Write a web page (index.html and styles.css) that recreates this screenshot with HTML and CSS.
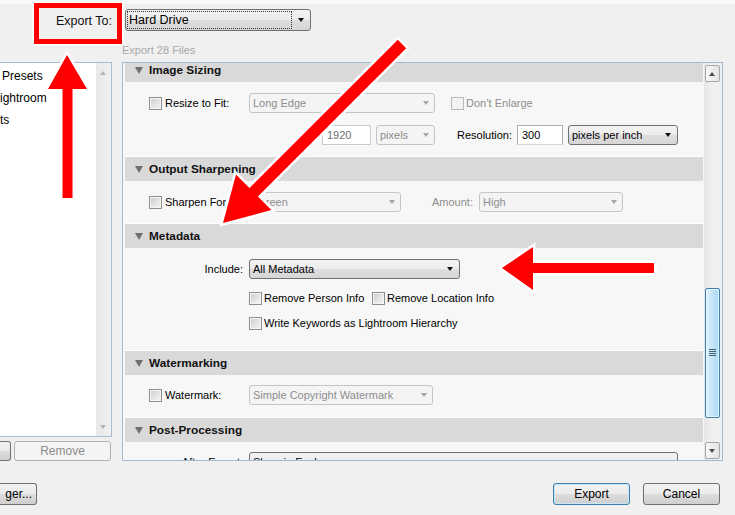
FILE: index.html
```html
<!DOCTYPE html>
<html>
<head>
<meta charset="utf-8">
<link rel="stylesheet" href="styles.css">
</head>
<body>
<div class="win">
  <div class="top">
    <div class="exportto">Export To:</div>
    <div class="combo on main-combo"><span class="focus">Hard Drive</span><span class="arr"></span></div>
  </div>
  <div class="count">Export 28 Files</div>
  <div class="main">
    <div class="leftcol">
      <div class="list">
        <div class="items">
          <div class="it it1">Presets</div>
          <div class="it">ightroom</div>
          <div class="it">ts</div>
        </div>
        <div class="lscroll"><span class="ltri up"></span><span class="ltri down"></span></div>
      </div>
      <div class="lbtns"><div class="btn bcut"></div><div class="btn bremove">Remove</div></div>
    </div>
    <div class="panel">
      <div class="content">
        <div class="hdr first"><span class="caret"></span>Image Sizing</div>
        <div class="sec s1">
          <div class="row r-ind">
            <div class="lab"><span class="cb"></span>Resize to Fit:</div>
            <div class="combo off w186"><span>Long Edge</span><span class="arr"></span></div>
            <div class="cbl dis"><span class="cb cbdis"></span>Don’t Enlarge</div>
          </div>
          <div class="row r2">
            <div class="inp dis w49">1920</div>
            <div class="combo off w59 ml5"><span>pixels</span><span class="arr"></span></div>
            <div class="rlab">Resolution:</div>
            <div class="inp w46">300</div>
            <div class="combo on w110 ml5"><span>pixels per inch</span><span class="arr"></span></div>
          </div>
        </div>
        <div class="hdr"><span class="caret"></span>Output Sharpening</div>
        <div class="sec s2">
          <div class="row r-ind">
            <div class="lab"><span class="cb"></span>Sharpen For</div>
            <div class="combo off w152"><span>Screen</span><span class="arr"></span></div>
            <div class="amt">Amount:</div>
            <div class="combo off w144"><span>High</span><span class="arr"></span></div>
          </div>
        </div>
        <div class="hdr"><span class="caret"></span>Metadata</div>
        <div class="sec s3">
          <div class="row">
            <div class="rlabel">Include:</div>
            <div class="combo on w211"><span>All Metadata</span><span class="arr"></span></div>
          </div>
          <div class="row r-cb r-cb1">
            <div class="cbl w123"><span class="cb"></span>Remove Person Info</div>
            <div class="cbl"><span class="cb"></span>Remove Location Info</div>
          </div>
          <div class="row r-cb r-cb2">
            <div class="cbl"><span class="cb"></span>Write Keywords as Lightroom Hierarchy</div>
          </div>
        </div>
        <div class="hdr"><span class="caret"></span>Watermarking</div>
        <div class="sec s4">
          <div class="row r-ind">
            <div class="lab"><span class="cb"></span>Watermark:</div>
            <div class="combo off w184"><span>Simple Copyright Watermark</span><span class="arr"></span></div>
          </div>
        </div>
        <div class="hdr"><span class="caret"></span>Post-Processing</div>
        <div class="sec s5">
          <div class="row">
            <div class="rlabel">After Export:</div>
            <div class="combo on w429"><span>Show in Explorer</span><span class="arr"></span></div>
          </div>
        </div>
      </div>
      <div class="vscroll">
        <div class="sbtn"><span class="stri up"></span></div>
        <div class="thumb"><span class="grip"></span></div>
        <div class="sbtn sdown"><span class="stri down"></span></div>
      </div>
    </div>
  </div>
  <div class="bottom">
    <div class="btn bmgr">ger...</div>
    <div class="btn bexport">Export</div>
    <div class="btn bcancel">Cancel</div>
  </div>
  <svg class="marks" width="735" height="515" viewBox="0 0 735 515">
    <polygon points="67,55 87,89 72.5,89 72.5,198 62.5,198 62.5,89 48,89"/>
    <polygon points="223,223 271.4,210 257.9,196.5 406.2,48.2 397.8,39.8 249.5,188.1 236,174.6"/>
    <polygon points="502,268 533,247 533,263 654,263 654,273 533,273 533,290"/>
  </svg>
</div>
</body>
</html>
```

FILE: styles.css
```css
* { box-sizing: border-box; }
html, body { margin: 0; padding: 0; }
body {
  background: #f0f0f0;
  font-family: "Liberation Sans", Arial, sans-serif;
  font-size: 11px;
  color: #000;
}
.win {
  position: relative;
  width: 735px;
  height: 515px;
  overflow: hidden;
  background: linear-gradient(#f9f9f9 0, #f9f9f9 4px, #f0f0f0 4px);
}
.top {
  display: flex;
  align-items: flex-start;
  padding-top: 3px;
  height: 44px;
}
.exportto {
  margin-left: 34px;
  width: 88px;
  height: 41px;
  border: 5px solid #f00;
  box-shadow: 0 0 0 1.5px #fff;
  display: flex;
  align-items: center;
  justify-content: flex-end;
  padding: 0 5px 5px 0;
  font-size: 12.5px;
  color: #111;
}
.count {
  height: 18px;
  padding-left: 122px;
  color: #a8a8a8;
  line-height: 12px;
}
.main { display: flex; height: 399px; }
.leftcol { width: 112px; margin-right: 10px; }
.list {
  height: 375px;
  display: flex;
  background: #fff;
  border: 1px solid #a9bcd3;
  border-left: none;
}
.items {
  flex: 1;
  padding-top: 2px;
  font-size: 12px;
  line-height: 22px;
  white-space: nowrap;
  overflow: hidden;
}
.it1 { padding-left: 2px; }
.lscroll {
  width: 15px;
  background: linear-gradient(90deg, #e8e8e8, #f0f0f0);
  position: relative;
}
.ltri {
  position: absolute;
  left: 4px;
  width: 0; height: 0;
  border-left: 3.5px solid transparent;
  border-right: 3.5px solid transparent;
}
.ltri.up { top: 8px; border-bottom: 4px solid #b4b4b4; }
.ltri.down { bottom: 7px; border-top: 4px solid #b4b4b4; }
.lbtns { display: flex; gap: 3px; margin-top: 4px; height: 20px; }
.btn {
  height: 100%;
  border: 1px solid #707070;
  border-radius: 3px;
  background: linear-gradient(#f2f2f2 0%, #ebebeb 50%, #dddddd 50%, #cfcfcf 100%);
  display: flex;
  align-items: center;
  justify-content: center;
  font-size: 12px;
  color: #000;
}
.bcut { width: 11px; border-left: none; border-radius: 0 3px 3px 0; }
.bremove {
  width: 97px;
  border-color: #adb2b5;
  background: #f4f4f4;
  color: #8d8d8d;
}
.panel {
  width: 601px;
  height: 399px;
  border: 1px solid #a5b9d1;
  background: #f7f7f7;
  display: flex;
}
.content { width: 581px; overflow: hidden; }
.hdr {
  margin: 0 1px 0 2px;
  height: 25px;
  border-top: 1px solid #fff;
  background: #d9d9d9;
  background-clip: padding-box;
  display: flex;
  align-items: center;
  padding-left: 10px;
  font-weight: bold;
  font-size: 11.8px;
  color: #111;
}
.hdr.first { margin-top: -6px; }
.caret {
  width: 0; height: 0;
  border-left: 4.5px solid transparent;
  border-right: 4.5px solid transparent;
  border-top: 7px solid #6e6e6e;
  margin-right: 6px;
}
.sec { display: flex; flex-direction: column; }
.s1 { height: 74px; padding-top: 11px; gap: 12px; }
.s2 { height: 42px; padding-top: 11px; }
.s3 { height: 102px; padding-top: 11px; }
.s4 { height: 42px; padding-top: 10px; }
.s5 { height: 40px; padding-top: 10px; }
.row {
  display: flex;
  align-items: center;
  height: 20px;
  white-space: nowrap;
}
.r-ind { padding-left: 26px; }
.r2 { padding-left: 199px; }
.r-cb { padding-left: 126px; }
.r-cb1 { margin-top: 9px; }
.r-cb2 { margin-top: 5px; }
.lab { width: 100px; display: flex; align-items: center; gap: 3px; }
.cbl { display: flex; align-items: center; gap: 2px; }
.cbl.dis { margin-left: 16px; color: #8d8d8d; }
.w123 { width: 123px; }
.cb {
  width: 13px;
  height: 13px;
  flex: none;
  border: 1px solid #8e8f8f;
  background: linear-gradient(135deg, #c6cad0 0%, #e6e7e8 60%, #f4f4f4 100%);
  box-shadow: inset 0 0 0 1px #f5f5f5;
}
.cb.cbdis { border-color: #b9b9b9; background: #f2f2f2; box-shadow: none; }
.combo {
  position: relative;
  height: 20px;
  border-radius: 3px;
  display: flex;
  align-items: center;
  padding-left: 3px;
  white-space: nowrap;
  overflow: hidden;
}
.combo .arr {
  position: absolute;
  right: 5px;
  top: 50%;
  margin-top: -2px;
  width: 0; height: 0;
  border-left: 3.5px solid transparent;
  border-right: 3.5px solid transparent;
}
.combo.off { border: 1px solid #c5c5c5; background: #f4f4f4; color: #8d8d8d; }
.combo.off .arr { border-top: 4px solid #a6a6a6; }
.combo.on {
  border: 1px solid #707070;
  background: linear-gradient(#f3f3f3 0%, #ececec 50%, #dedede 50%, #d6d6d6 100%);
  color: #000;
}
.combo.on .arr { border-top: 4px solid #111; right: 6px; }
.main-combo {
  margin-left: 3px;
  margin-top: 6px;
  width: 186px;
  height: 22px;
  padding-left: 1px;
  font-size: 12.5px;
}
.main-combo .arr { right: 5px; }
.focus {
  width: 165px;
  height: 18px;
  border: 1px dotted #333;
  display: flex;
  align-items: center;
  padding-left: 1px;
}
.w186 { width: 186px; }
.w59 { width: 59px; }
.w110 { width: 110px; }
.w152 { width: 152px; }
.w144 { width: 144px; }
.w211 { width: 211px; }
.w184 { width: 184px; }
.w429 { width: 429px; }
.ml5 { margin-left: 5px; }
.inp {
  height: 20px;
  border: 1px solid #abadb3;
  border-bottom-color: #d5d9de;
  background: #fff;
  display: flex;
  align-items: center;
  padding-left: 4px;
}
.inp.dis { border-color: #c9c9c9; color: #6d6d6d; }
.w49 { width: 49px; }
.w46 { width: 46px; }
.rlab { margin-left: 22px; width: 60px; }
.amt { margin-left: 31px; width: 47px; color: #8d8d8d; }
.rlabel { width: 126px; text-align: right; padding-right: 6px; flex: none; }
.vscroll {
  width: 18px;
  background: linear-gradient(90deg, #e6e6e6, #f0f0f0 50%, #f0f0f0);
  padding: 2px 2px 0 1px;
  display: flex;
  flex-direction: column;
}
.sbtn {
  height: 17px;
  border: 1px solid #a7a7a7;
  border-radius: 2px;
  background: linear-gradient(90deg, #f6f6f6, #e3e3e3);
  position: relative;
}
.sdown { margin-top: 24px; }
.stri {
  position: absolute;
  left: 3px;
  top: 6px;
  width: 0; height: 0;
  border-left: 3.5px solid transparent;
  border-right: 3.5px solid transparent;
}
.stri.up { border-bottom: 4px solid #4e4e4e; }
.stri.down { border-top: 4px solid #4e4e4e; }
.thumb {
  margin-top: 206px;
  height: 130px;
  border: 1px solid #3c7fb1;
  border-radius: 2px;
  background: linear-gradient(90deg, #e3f4fc, #c6e6f8 45%, #a9d9f3);
  box-shadow: inset 0 0 0 1px #eaf6fd;
  position: relative;
}
.grip {
  position: absolute;
  left: 3px;
  top: 60px;
  width: 7px;
  height: 7px;
  background: repeating-linear-gradient(#44606e 0, #44606e 1px, transparent 1px, transparent 2px);
}
.bottom {
  display: flex;
  height: 22px;
  margin-top: 22px;
}
.bmgr { width: 37px; border-left: none; border-radius: 0 3px 3px 0; justify-content: flex-end; padding-right: 4px; }
.bexport {
  width: 77px;
  margin-left: 516px;
  border-color: #3c7fb1;
  box-shadow: inset 0 0 0 1px #c9e6f7;
}
.bcancel { width: 77px; margin-left: 13px; }
.marks {
  position: absolute;
  left: 0;
  top: 0;
  pointer-events: none;
}
.marks polygon {
  fill: #ff0000;
  stroke: #ffffff;
  stroke-width: 5;
  stroke-linejoin: miter;
  paint-order: stroke fill;
}
```
